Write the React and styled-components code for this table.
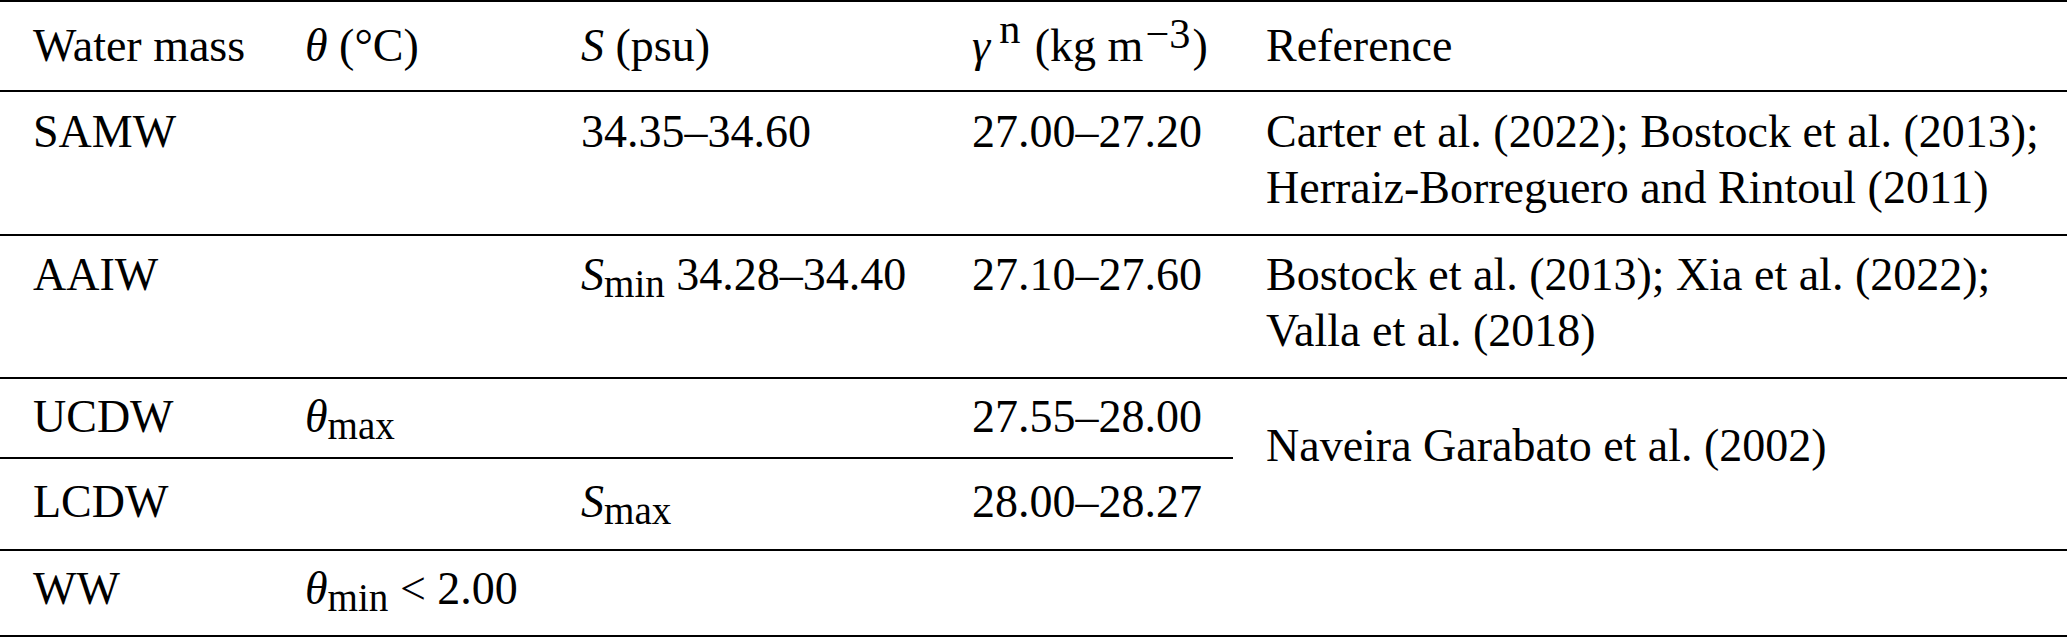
import React from "react";
import styled, { createGlobalStyle } from "styled-components";

const Global = createGlobalStyle`
  html, body {
    margin: 0;
    padding: 0;
    background: #ffffff;
  }
  body {
    font-family: "Liberation Serif", "Times New Roman", serif;
    color: #000;
  }
`;

const Table = styled.div`
  display: grid;
  grid-template-columns: 272px 276px 391px 294px 1fr;
  width: 2067px;
  border-top: 2px solid #000;
  font-family: "Liberation Serif", "Times New Roman", serif;
  font-size: 46px;
  line-height: 56px;
  color: #000;
`;

const Cell = styled.div`
  padding: ${(p) => p.$pt}px 0 ${(p) => p.$pb}px 33px;
  border-bottom: ${(p) => (p.$noLine ? "none" : "2px solid #000")};
  white-space: nowrap;
  grid-row: ${(p) => (p.$span ? `span ${p.$span}` : "auto")};
`;

const I = styled.span`
  font-style: italic;
`;

const Sup = styled.span`
  font-size: 0.92em;
  line-height: 0;
  vertical-align: ${(p) => p.$raise}px;
  margin-left: ${(p) => p.$gap || 0}px;
  margin-right: ${(p) => p.$after || 0}px;
`;

const Sub = styled.span`
  font-size: 0.85em;
  line-height: 0;
  vertical-align: -0.18em;
`;

const rows = [
  {
    pt: 11.5,
    pb: 18.5,
    cells: [
      "SAMW",
      null,
      "34.35–34.60",
      "27.00–27.20",
      <>
        Carter et al. (2022); Bostock et al. (2013);
        <br />
        Herraiz-Borreguero and Rintoul (2011)
      </>,
    ],
  },
  {
    pt: 10.5,
    pb: 18.5,
    cells: [
      "AAIW",
      null,
      <>
        <I>S</I>
        <Sub>min</Sub> 34.28–34.40
      </>,
      "27.10–27.60",
      <>
        Bostock et al. (2013); Xia et al. (2022);
        <br />
        Valla et al. (2018)
      </>,
    ],
  },
];

export default function App() {
  return (
    <>
      <Global />
      <Table>
        <Cell $pt={16} $pb={16}>Water mass</Cell>
        <Cell $pt={16} $pb={16}>
          <I>θ</I> (°C)
        </Cell>
        <Cell $pt={16} $pb={16}>
          <I>S</I> (psu)
        </Cell>
        <Cell $pt={16} $pb={16}>
          <I>γ</I>
          <Sup $raise={18} $gap={9} $after={3}>n</Sup> (kg m
          <Sup $raise={13} $gap={2} $after={2}>−3</Sup>)
        </Cell>
        <Cell $pt={16} $pb={16}>Reference</Cell>

        {rows.map((r, i) =>
          r.cells.map((c, j) => (
            <Cell key={`${i}-${j}`} $pt={r.pt} $pb={r.pb}>
              {c}
            </Cell>
          ))
        )}

        <Cell $pt={10} $pb={12}>UCDW</Cell>
        <Cell $pt={10} $pb={12}>
          <I>θ</I>
          <Sub>max</Sub>
        </Cell>
        <Cell $pt={10} $pb={12} />
        <Cell $pt={10} $pb={12}>27.55–28.00</Cell>
        <Cell $pt={39} $pb={0} $span={2}>
          Naveira Garabato et al. (2002)
        </Cell>

        <Cell $pt={15} $pb={19}>LCDW</Cell>
        <Cell $pt={15} $pb={19} />
        <Cell $pt={15} $pb={19}>
          <I>S</I>
          <Sub>max</Sub>
        </Cell>
        <Cell $pt={15} $pb={19}>28.00–28.27</Cell>

        <Cell $pt={10} $pb={18}>WW</Cell>
        <Cell $pt={10} $pb={18}>
          <I>θ</I>
          <Sub>min</Sub> &lt; 2.00
        </Cell>
        <Cell $pt={10} $pb={18} />
        <Cell $pt={10} $pb={18} />
        <Cell $pt={10} $pb={18} />
      </Table>
    </>
  );
}
